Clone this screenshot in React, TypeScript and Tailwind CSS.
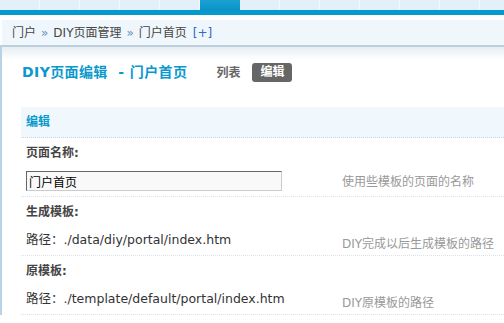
const font = {
  fontFamily: '"DejaVu Sans", "Noto Sans CJK SC", sans-serif',
};

function TopTabs() {
  const cells = Array.from({ length: 13 }, (_, i) => i);
  return (
    <div className="flex h-[10px] bg-[#e3eff9]">
      {cells.map((i) =>
        i === 5 ? (
          <div key={i} className="h-full w-[40px] shrink-0 bg-gradient-to-b from-[#1ba2d3] to-[#0a92c8]" />
        ) : (
          <div key={i} className="h-full w-[40px] shrink-0 border-r border-[#f2f8fd]" />
        )
      )}
    </div>
  );
}

function Breadcrumb() {
  return (
    <div className="ml-[2px] flex h-[25px] items-center bg-[#eff7fc] pl-[10px] text-[12px] text-[#444]">
      <span>门户</span>
      <span className="mx-[5px] text-[#6b8fc0]">»</span>
      <span>DIY页面管理</span>
      <span className="mx-[5px] text-[#6b8fc0]">»</span>
      <span>门户首页</span>
      <span className="ml-[6px] text-[#3366cc]">[+]</span>
    </div>
  );
}

function Field({
  label,
  value,
  hint,
  hintLow,
}: {
  label: string;
  value: React.ReactNode;
  hint: string;
  hintLow?: boolean;
}) {
  return (
    <div className="border-b border-dotted border-[#d9e2ea]">
      <div className="flex h-[29px] items-center pl-[5px] text-[12px] font-bold text-[#444]">{label}</div>
      <div className="flex h-[29px] items-center pl-[5px]">
        <div className="w-[316px] shrink-0">{value}</div>
        <div className={`text-[12px] text-[#999] ${hintLow ? "pt-[7px]" : ""}`}>{hint}</div>
      </div>
    </div>
  );
}

export default function App() {
  return (
    <div className="h-[323px] w-[504px] overflow-hidden bg-white text-[12px] text-[#333]" style={font}>
      <TopTabs />
      <div className="h-[5px] bg-[#0599cc]" />
      <div className="pt-[5px]">
        <Breadcrumb />
      </div>
      <div className="border-l-2 border-[#b8d3e3]">
        <div className="h-[2px] bg-[#bccfdc]" />
        <div className="h-[13px] bg-gradient-to-b from-[#e6eef4] to-white" />

        <div className="flex h-[25px] items-center pl-[20px]">
          <h3 className="text-[14px] font-bold tracking-[0.4px] text-[#0a99cc]">DIY页面编辑 &nbsp;- 门户首页</h3>
          <span className="ml-[29px] text-[12px] font-bold text-[#666]">列表</span>
          <span className="ml-[12px] rounded-[3px] bg-[#666] px-[8px] py-[3px] text-[12px] font-bold leading-[13px] text-white">
            编辑
          </span>
        </div>

        <div className="ml-[19px] mt-[22px]">
          <div className="flex h-[31px] items-center border-b border-dotted border-[#c9d8e4] bg-[#f0f7fd] pl-[5px] text-[12px] font-bold text-[#0a99cc]">
            编辑
          </div>
          <Field
            label="页面名称:"
            value={
              <input
                readOnly
                value="门户首页"
                className="h-[20px] w-[256px] border border-t-[#666] border-l-[#666] border-b-[#ccc] border-r-[#ccc] bg-[#f9f9f9] pl-[2px] text-[12px] text-black outline-none"
                style={font}
              />
            }
            hint="使用些模板的页面的名称"
          />
          <Field
            label="生成模板:"
            value={<span className="text-[12.5px] text-[#333]">路径：./data/diy/portal/index.htm</span>}
            hint="DIY完成以后生成模板的路径"
            hintLow
          />
          <Field
            label="原模板:"
            value={<span className="text-[12.5px] text-[#333]">路径：./template/default/portal/index.htm</span>}
            hint="DIY原模板的路径"
            hintLow
          />
        </div>
      </div>
    </div>
  );
}
